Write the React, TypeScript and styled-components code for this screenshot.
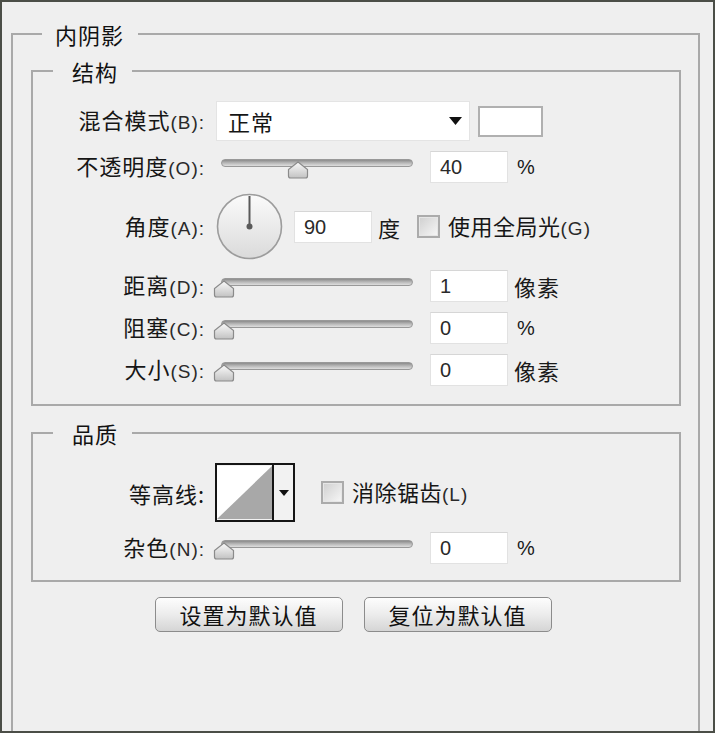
import React from "react";
import styled, { createGlobalStyle } from "styled-components";

const CJK = '"Noto Sans CJK SC", "Noto Sans", sans-serif';
const LATIN = '"Liberation Sans", "Noto Sans CJK SC", sans-serif';

const Global = createGlobalStyle`
  html, body { margin: 0; padding: 0; background: #efefef; }
  body { font-family: ${CJK}; color: #151515; }
  * { box-sizing: border-box; }
`;

const Frame = styled.div`
  width: 715px;
  height: 733px;
  border: 2px solid #4b4e47;
  background: #efefef;
  overflow: hidden;
`;

const GroupBox = styled.fieldset<{ $outer?: boolean; $mt?: number }>`
  margin: ${(p) => (p.$outer ? "19px 13px 0 9px" : `${p.$mt ?? 0}px 0 0 0`)};
  padding: 0;
  min-inline-size: 0;
  border: 2px solid #a9a9a9;
  ${(p) => (p.$outer ? "height: 720px;" : "")}
`;

const Title = styled.legend<{ $ml: number; $pl: number; $pr: number }>`
  margin-left: ${(p) => p.$ml}px;
  padding: 0 ${(p) => p.$pr}px 0 ${(p) => p.$pl}px;
  font-family: ${CJK};
  font-size: 22px;
  line-height: 26px;
  letter-spacing: 1px;
  color: #111;
`;

const Body = styled.div<{ $pt: number; $pb: number }>`
  display: flex;
  flex-direction: column;
  gap: 10px;
  padding: ${(p) => p.$pt}px 0 ${(p) => p.$pb}px 0;
`;

const OuterBody = styled.div`
  padding: 11px 17px 0 18px;
`;

const Row = styled.div<{ $gap?: number; $h: number }>`
  display: flex;
  align-items: center;
  gap: ${(p) => p.$gap ?? 8}px;
  height: ${(p) => p.$h}px;
`;

const Label = styled.div`
  width: 172px;
  flex: none;
  text-align: right;
  font-size: 22px;
  line-height: 26px;
  letter-spacing: 1px;
  white-space: nowrap;
  color: #161616;
`;

const Key = styled.span`
  font-family: ${LATIN};
  font-size: 19px;
  letter-spacing: 1px;
  color: #2a2a2a;
`;

const Dropdown = styled.div`
  width: 254px;
  height: 40px;
  flex: none;
  display: flex;
  align-items: center;
  justify-content: space-between;
  padding: 0 7px 0 11px;
  background: #fff;
  border: 1px solid #e4e4e4;
  font-size: 22px;
  letter-spacing: 1px;
`;

const Swatch = styled.div`
  width: 65px;
  height: 31px;
  flex: none;
  margin-left: -3px;
  background: #fff;
  border: 2px solid #b0b0b0;
`;

const Field = styled.div`
  width: 78px;
  height: 32px;
  flex: none;
  padding-left: 9px;
  background: #fff;
  border: 1px solid #e2e2e2;
  border-top-color: #d6d6d6;
  font-family: ${LATIN};
  font-size: 20px;
  line-height: 30px;
  color: #2a2a2a;
`;

const Unit = styled.span<{ $latin?: boolean; $ml?: number }>`
  font-family: ${(p) => (p.$latin ? LATIN : CJK)};
  font-size: ${(p) => (p.$latin ? 20 : 22)}px;
  line-height: 26px;
  letter-spacing: 1px;
  color: #1a1a1a;
  margin-left: ${(p) => p.$ml ?? (p.$latin ? 1 : -2)}px;
`;

const SliderBox = styled.div`
  position: relative;
  width: 209px;
  height: 32px;
  flex: none;
`;

const Track = styled.div`
  margin: 8px 0 0 8px;
  width: 192px;
  height: 8px;
  border-radius: 4px;
  border: 1px solid #999;
  background: linear-gradient(#8c8c8c, #b9b9b9 50%, #dedede);
`;

const Thumb = styled.svg`
  position: absolute;
  top: 10px;
`;

const DialSvg = styled.svg`
  flex: none;
  display: block;
`;

const CheckLabel = styled.div<{ $ml?: number }>`
  display: flex;
  align-items: center;
  gap: 8px;
  margin-left: ${(p) => p.$ml ?? 0}px;
  font-size: 22px;
  line-height: 26px;
  letter-spacing: 0.5px;
  white-space: nowrap;
  color: #161616;
`;

const Check = styled.span`
  width: 23px;
  height: 23px;
  flex: none;
  border: 2px solid #ababab;
  background: linear-gradient(135deg, #cfcfcf, #f7f7f7);
  box-shadow: inset 0 0 0 1px #e6e6e6;
`;

const Contour = styled.div`
  width: 80px;
  height: 59px;
  flex: none;
  display: flex;
  border: 2px solid #151515;
  background: #f2f2f2;
`;

const ContourPreview = styled.svg`
  display: block;
  flex: none;
  border-right: 2px solid #151515;
`;

const ContourArrow = styled.div`
  flex: 1;
  display: flex;
  align-items: center;
  justify-content: center;
`;

const ButtonRow = styled.div`
  display: flex;
  justify-content: center;
  gap: 21px;
  margin: 15px 6px 0 0;
`;

const Button = styled.button`
  width: 188px;
  height: 35px;
  padding: 0;
  border: 1px solid #8c8c8c;
  border-radius: 5px;
  background: linear-gradient(#fdfdfd, #ececec 50%, #d5d5d5);
  font-family: ${CJK};
  font-size: 22px;
  line-height: 33px;
  letter-spacing: 1px;
  color: #111;
`;

const Caret = ({ w = 13, h = 8 }: { w?: number; h?: number }) => (
  <svg width={w} height={h} viewBox={`0 0 ${w} ${h}`}>
    <polygon points={`0,0 ${w},0 ${w / 2},${h}`} fill="#111" />
  </svg>
);

const Slider = ({ value }: { value: number }) => (
  <SliderBox>
    <Track />
    <Thumb
      width="22"
      height="18"
      viewBox="0 0 22 18"
      style={{ left: `${value * 1.85}px` }}
    >
      <defs>
        <linearGradient id="thumbg" x1="0" y1="0" x2="0" y2="1">
          <stop offset="0" stopColor="#fbfbfb" />
          <stop offset="1" stopColor="#c2c2c2" />
        </linearGradient>
      </defs>
      <path
        d="M11 1 L20.5 8.5 L20.5 15 Q20.5 17 18.5 17 L3.5 17 Q1.5 17 1.5 15 L1.5 8.5 Z"
        fill="url(#thumbg)"
        stroke="#8a8a8a"
        strokeWidth="1.2"
      />
    </Thumb>
  </SliderBox>
);

const Dial = () => (
  <DialSvg width="67" height="67" viewBox="0 0 67 67">
    <defs>
      <linearGradient id="dialg" x1="0" y1="0" x2="0" y2="1">
        <stop offset="0" stopColor="#fbfbfb" />
        <stop offset="1" stopColor="#dadada" />
      </linearGradient>
    </defs>
    <circle cx="33.5" cy="33.5" r="32" fill="url(#dialg)" stroke="#9c9c9c" strokeWidth="1.6" />
    <line x1="33.5" y1="3" x2="33.5" y2="33.5" stroke="#5a5a5a" strokeWidth="2" />
    <circle cx="33.5" cy="33.5" r="3" fill="#5a5a5a" />
  </DialSvg>
);

type SliderRowProps = { label: string; k: string; value: number; field: string; unit: string; latin?: boolean };

const SliderRow = ({ label, k, value, field, unit, latin }: SliderRowProps) => (
  <Row $h={32}>
    <Label>
      {label}
      <Key>{k}</Key>
    </Label>
    <Slider value={value} />
    <Field>{field}</Field>
    <Unit $latin={latin}>{unit}</Unit>
  </Row>
);

export default function App() {
  return (
    <>
      <Global />
      <Frame>
        <GroupBox $outer>
          <Title $ml={29} $pl={13} $pr={14}>
            内阴影
          </Title>
          <OuterBody>
            <GroupBox>
              <Title $ml={20} $pl={19} $pr={14}>
                结构
              </Title>
              <Body $pt={17} $pb={18}>
                <Row $h={40} $gap={11}>
                  <Label>
                    混合模式<Key>(B):</Key>
                  </Label>
                  <Dropdown>
                    <span>正常</span>
                    <Caret />
                  </Dropdown>
                  <Swatch />
                </Row>
                <SliderRow label="不透明度" k="(O):" value={40} field="40" unit="%" latin />
                <Row $h={67} $gap={11}>
                  <Label>
                    角度<Key>(A):</Key>
                  </Label>
                  <Dial />
                  <Field>90</Field>
                  <Unit $ml={-5}>度</Unit>
                  <CheckLabel $ml={5}>
                    <Check />
                    <span>
                      使用全局光<Key>(G)</Key>
                    </span>
                  </CheckLabel>
                </Row>
                <SliderRow label="距离" k="(D):" value={0} field="1" unit="像素" />
                <SliderRow label="阻塞" k="(C):" value={0} field="0" unit="%" latin />
                <SliderRow label="大小" k="(S):" value={0} field="0" unit="像素" />
              </Body>
            </GroupBox>
            <GroupBox $mt={14}>
              <Title $ml={20} $pl={19} $pr={14}>
                品质
              </Title>
              <Body $pt={17} $pb={16}>
                <Row $h={59} $gap={10}>
                  <Label>等高线:</Label>
                  <Contour>
                    <ContourPreview width="57" height="55" viewBox="0 0 57 55">
                      <rect x="0" y="0" width="57" height="55" fill="#fff" />
                      <polygon points="0,55 57,0 57,55" fill="#a8a8a8" />
                    </ContourPreview>
                    <ContourArrow>
                      <Caret w={10} h={6} />
                    </ContourArrow>
                  </Contour>
                  <CheckLabel $ml={16}>
                    <Check />
                    <span>
                      消除锯齿<Key>(L)</Key>
                    </span>
                  </CheckLabel>
                </Row>
                <SliderRow label="杂色" k="(N):" value={0} field="0" unit="%" latin />
              </Body>
            </GroupBox>
            <ButtonRow>
              <Button>设置为默认值</Button>
              <Button>复位为默认值</Button>
            </ButtonRow>
          </OuterBody>
        </GroupBox>
      </Frame>
    </>
  );
}
